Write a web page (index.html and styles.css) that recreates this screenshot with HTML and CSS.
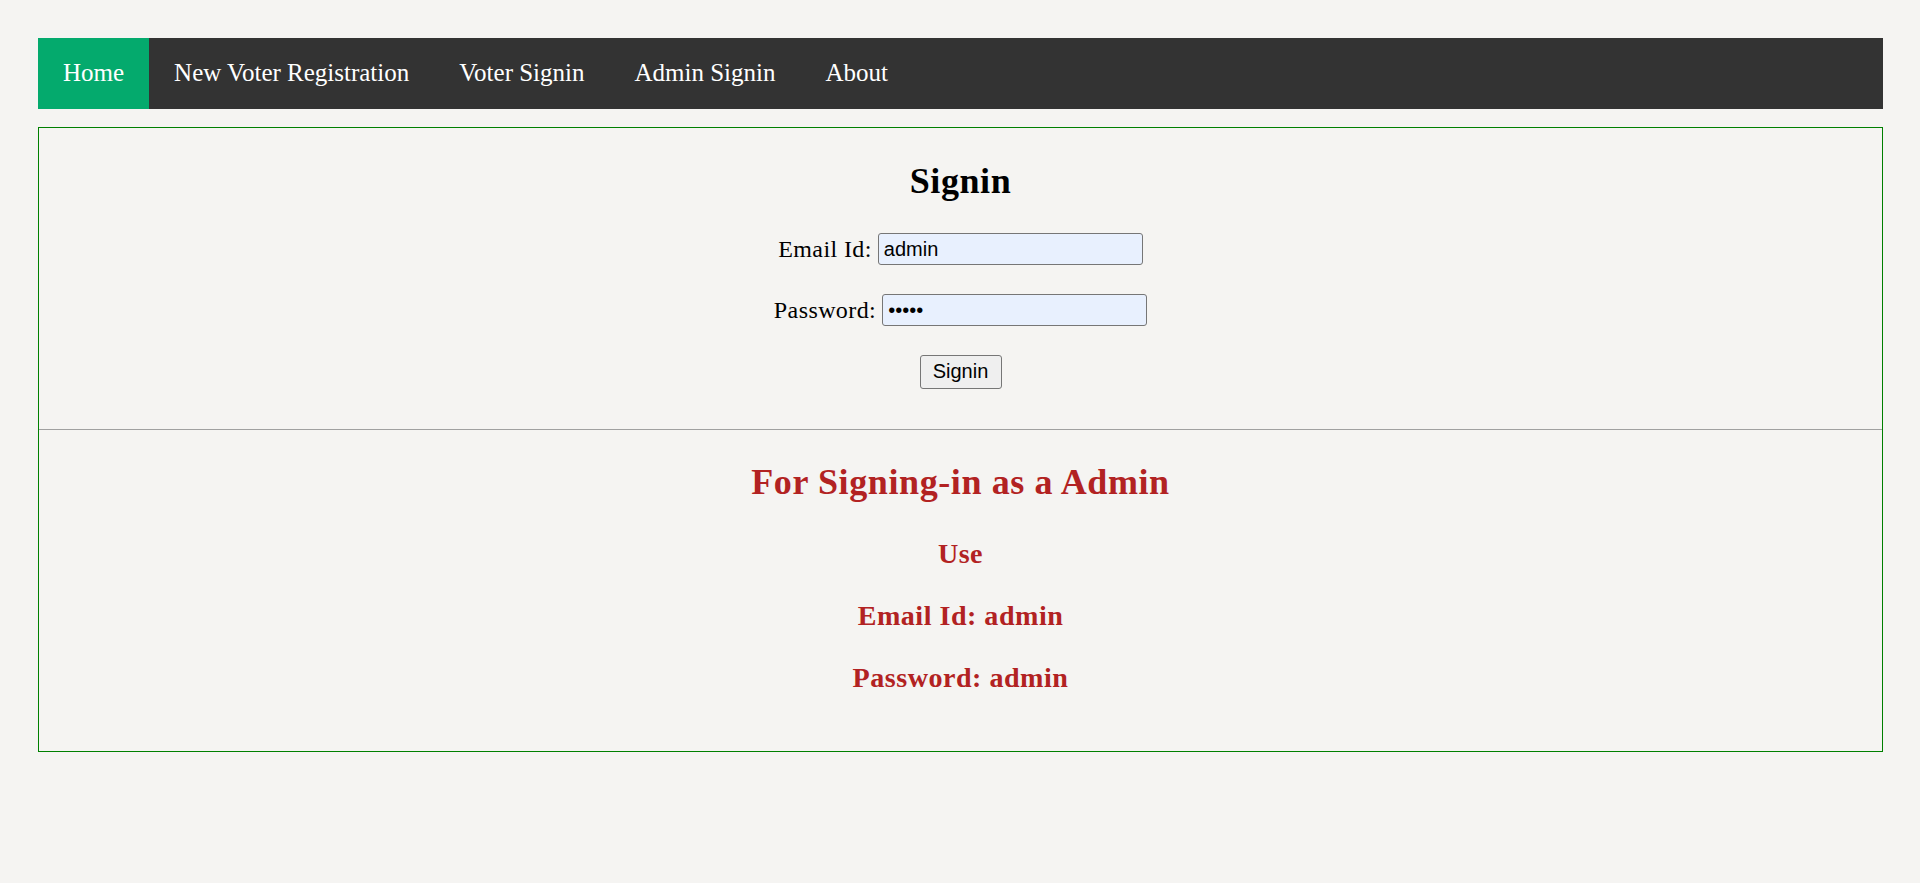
FILE: index.html
```html
<!DOCTYPE html>
<html lang="en">
<head>
<meta charset="utf-8">
<title>Admin Signin</title>
<link rel="stylesheet" href="styles.css">
</head>
<body>
<nav class="topnav">
  <a class="nav-link active" href="#">Home</a>
  <a class="nav-link" href="#">New Voter Registration</a>
  <a class="nav-link" href="#">Voter Signin</a>
  <a class="nav-link" href="#">Admin Signin</a>
  <a class="nav-link" href="#">About</a>
</nav>
<main class="panel">
  <section class="signin">
    <h2 class="title">Signin</h2>
    <form class="form">
      <div class="row"><label for="email">Email Id:</label><input id="email" class="field" type="text" value="admin"></div>
      <div class="row"><label for="pass">Password:</label><input id="pass" class="field" type="password" value="admin"></div>
      <div class="row"><button class="btn" type="button">Signin</button></div>
    </form>
  </section>
  <section class="hint">
    <h2 class="title red">For Signing-in as a Admin</h2>
    <div class="hint-lines">
      <h3 class="line">Use</h3>
      <h3 class="line">Email Id: admin</h3>
      <h3 class="line">Password: admin</h3>
    </div>
  </section>
</main>
</body>
</html>
```
FILE: styles.css
```css
html, body {
  margin: 0;
  background: #f5f4f2;
}
body {
  padding: 38px 37px 0 38px;
  font-family: "Liberation Serif", "Times New Roman", serif;
  color: #000;
}
.topnav {
  display: flex;
  height: 71px;
  background: #333333;
}
.nav-link {
  display: block;
  padding: 19.5px 25px 22px;
  font-size: 25px;
  line-height: 29.3px;
  color: #ffffff;
  text-decoration: none;
}
.nav-link.active {
  background: #04aa6d;
}
.panel {
  margin-top: 18px;
  border: 1px solid #008000;
}
.signin {
  padding: 32.5px 0 40.3px;
  border-bottom: 1px solid #a0a0a0;
  text-align: center;
}
.title {
  margin: 0;
  font-size: 36px;
  line-height: 41.4px;
  font-weight: bold;
  letter-spacing: 0.6px;
  text-align: center;
}
.red {
  color: #b22222;
}
.form {
  margin-top: 31.4px;
  display: flex;
  flex-direction: column;
  gap: 29px;
}
.row {
  display: flex;
  justify-content: center;
  align-items: center;
  gap: 6px;
  height: 32px;
  font-size: 24px;
  line-height: 27.6px;
}
.row label {
  letter-spacing: 0.4px;
}
.row:last-child {
  height: 33.4px;
}
.field {
  box-sizing: border-box;
  width: 265px;
  height: 32px;
  margin: 0;
  padding: 0 5px;
  border: 1px solid #767676;
  border-radius: 3px;
  background: #e8f0fe;
  font-family: "Liberation Sans", Arial, sans-serif;
  font-size: 20px;
  color: #000;
}
.btn {
  box-sizing: border-box;
  height: 33.4px;
  width: 82px;
  margin: 0;
  padding: 0;
  border: 1px solid #767676;
  border-radius: 3px;
  background: #efefef;
  font-family: "Liberation Sans", Arial, sans-serif;
  font-size: 20px;
  color: #000;
}
.hint {
  padding: 32.2px 0 57.5px;
}
.hint-lines {
  margin-top: 34px;
  display: flex;
  flex-direction: column;
  gap: 30px;
}
.line {
  margin: 0;
  font-size: 28.08px;
  line-height: 32px;
  font-weight: bold;
  letter-spacing: 0.5px;
  color: #b22222;
  text-align: center;
}
```
